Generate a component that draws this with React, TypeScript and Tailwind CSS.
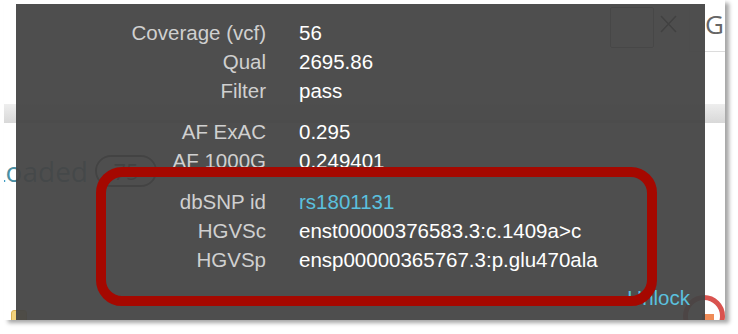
type Item = { label: string; value: string; link?: boolean }

const groups: Item[][] = [
  [
    { label: 'Coverage (vcf)', value: '56' },
    { label: 'Qual', value: '2695.86' },
    { label: 'Filter', value: 'pass' },
  ],
  [
    { label: 'AF ExAC', value: '0.295' },
    { label: 'AF 1000G', value: '0.249401' },
  ],
  [
    { label: 'dbSNP id', value: 'rs1801131', link: true },
    { label: 'HGVSc', value: 'enst00000376583.3:c.1409a>c' },
    { label: 'HGVSp', value: 'ensp00000365767.3:p.glu470ala' },
  ],
]

function Group({ items, first }: { items: Item[]; first?: boolean }) {
  return (
    <div className={`grid grid-cols-[250px_1fr] gap-x-[33px] ${first ? '' : 'mt-[12px]'}`}>
      {items.map((it) => (
        <div key={it.label} className="contents">
          <div className="text-right text-[#d0d0d0] whitespace-nowrap">{it.label}</div>
          <div className={`whitespace-nowrap ${it.link ? 'text-[#5bc0de]' : 'text-white'}`}>{it.value}</div>
        </div>
      ))}
    </div>
  )
}

export default function App() {
  return (
    <div className="w-[738px] h-[334px] bg-white overflow-hidden font-['Liberation_Sans',Arial,sans-serif]">
      <div className="relative ml-[4px] w-[721px] h-[320px] overflow-hidden bg-white shadow-[4px_3px_4px_rgba(0,0,0,0.35)]">
        {/* page underneath */}
        <div className="flex flex-col">
          <div className="flex items-start pt-[7px] pl-[606px] h-[52px]">
            <div className="w-[44px] h-[41px] shrink-0 border border-[#777] rounded-[2px]" />
            <svg className="ml-[6px] mt-[8px] shrink-0" width="17" height="18" viewBox="0 0 17 18">
              <path d="M1 1L16 17M16 1L1 17" stroke="#000" strokeWidth="1.6" fill="none" />
            </svg>
            <div className="ml-[12px] w-[60px] h-[45px] shrink-0 border-l border-b border-[#dcdcdc] pl-[15px] text-[26px] leading-[34px] text-[#666] font-['Open_Sans',sans-serif]">
              Go
            </div>
          </div>

          <div className="mt-[52px] h-[19px] bg-linear-to-b from-[#eeeeee] to-[#d8d8d8]" />

          <div className="mt-[32px] h-[32px] flex items-center ml-[-13px] font-['Open_Sans',sans-serif]">
            <span className="w-[104px] shrink-0 text-[28px] leading-[32px] text-[#4b8fa3]">Loaded</span>
            <div className="w-[62px] h-[32px] shrink-0 rounded-full border-2 border-[#333] flex items-center justify-center text-[22px] text-[#333]">
              75
            </div>
          </div>

          <div className="mt-[108px] flex items-start pl-[7px]">
            <div className="mt-[15px] w-[16px] h-[16px] rounded-[3px] bg-[#f2d27c] border border-[#d8b055]" />
            <div className="ml-auto w-[42px] h-[42px] rounded-full border-[5px] border-[#d9534f] flex items-center justify-center pl-[8px] pt-[8px]">
              <div className="w-[12px] h-[12px] bg-[#ef8b57]" />
            </div>
          </div>
        </div>

        {/* dark popover */}
        <div className="absolute left-[12px] top-[4px] w-[689px] bottom-0 bg-[rgba(69,69,69,0.95)] pt-[14px] text-[20.5px] leading-[29px]">
          {groups.map((g, i) => (
            <Group key={i} items={g} first={i === 0} />
          ))}
          <div className="mt-[9px] pr-[15px] text-right text-[#5bc0de]">Unlock</div>
        </div>

        {/* annotation */}
        <div className="absolute left-[92px] top-[167px] w-[561px] h-[139px] border-[10px] border-[#a50800] rounded-[26px]" />
      </div>
    </div>
  )
}
